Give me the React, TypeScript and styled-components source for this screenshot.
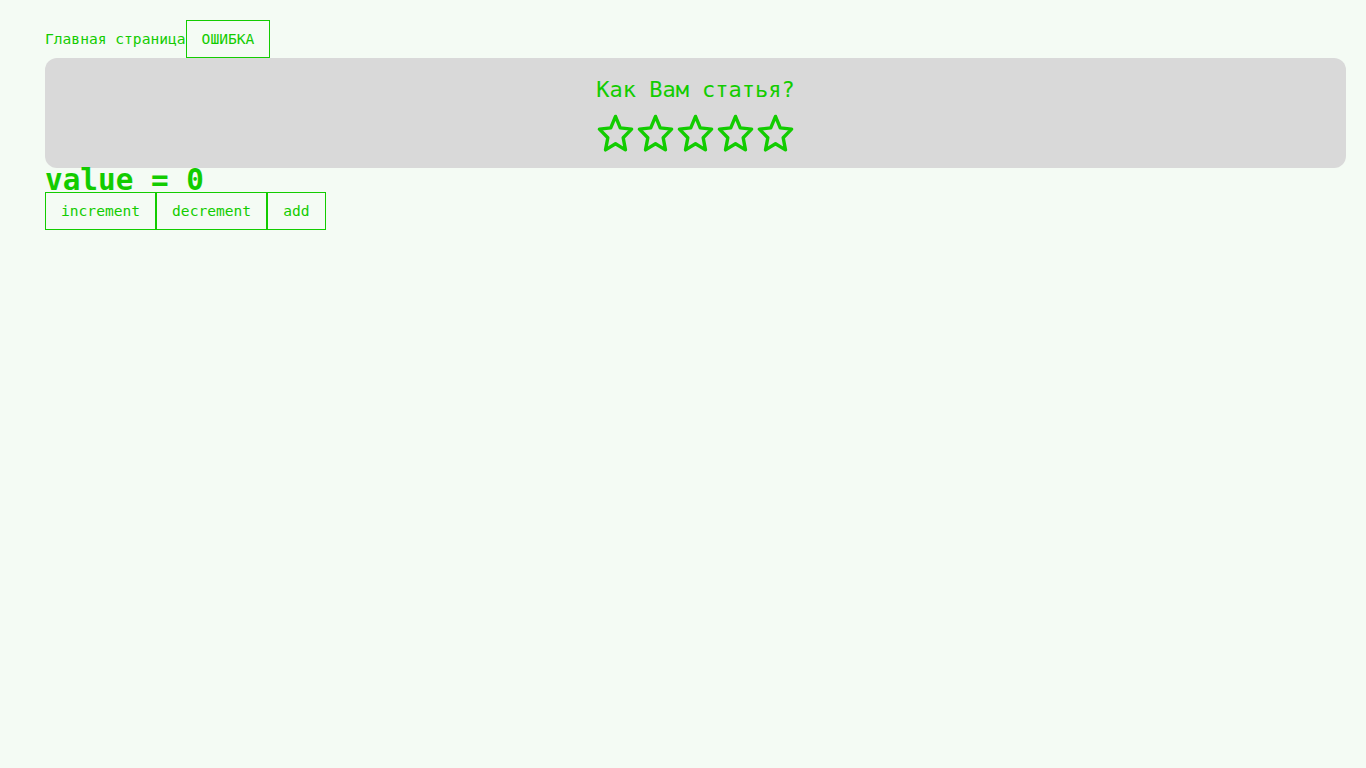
import React from "react";
import styled, { createGlobalStyle } from "styled-components";

const GREEN = "#12cc00";

const GlobalStyle = createGlobalStyle`
  html, body {
    margin: 0;
    padding: 0;
    background: #f4fbf4;
  }
  body {
    font-family: "DejaVu Sans Mono", "Liberation Mono", monospace;
    font-size: 14.6px;
    color: ${GREEN};
  }
`;

const Page = styled.div`
  min-height: 768px;
  box-sizing: border-box;
  padding: 20px 20px 0 45px;
  display: flex;
  flex-direction: column;
`;

const Navbar = styled.nav`
  display: flex;
  align-items: center;
`;

const NavLink = styled.a`
  color: ${GREEN};
  text-decoration: none;
  font-size: 14.6px;
  line-height: 16px;
`;

const OutlineButton = styled.button`
  font-family: inherit;
  font-size: 14.6px;
  font-weight: normal;
  line-height: 16px;
  color: ${GREEN};
  background: transparent;
  border: 1px solid ${GREEN};
  padding: 10px 15px;
  margin: 0;
  cursor: pointer;
`;

const Card = styled.section`
  background: #d9d9d9;
  border-radius: 12px;
  padding: 16px 0 15px;
  display: flex;
  flex-direction: column;
  align-items: center;
  gap: 7px;
`;

const CardTitle = styled.h2`
  margin: 0;
  font-size: 22px;
  line-height: 32px;
  font-weight: normal;
  color: ${GREEN};
`;

const Stars = styled.div`
  display: flex;
`;

const StarSvg = styled.svg`
  width: 40px;
  height: 40px;
  display: block;
  cursor: pointer;
`;

const ValueTitle = styled.h1`
  margin: 0;
  font-size: 29.33px;
  line-height: 24px;
  font-weight: bold;
  color: ${GREEN};
`;

const ButtonRow = styled.div`
  display: flex;
`;

const Star = () => (
  <StarSvg viewBox="0 0 40 40">
    <path
      d="M19.5 3.4 L24.24 14.82 L35.62 16.16 L27.18 24.69 L29.48 36.9 L19.5 30.78 L9.52 36.9 L11.82 24.69 L3.38 16.16 L14.76 14.82 Z"
      fill="none"
      stroke={GREEN}
      strokeWidth={3.4}
      strokeLinejoin="round"
    />
  </StarSvg>
);

export default function App() {
  return (
    <>
      <GlobalStyle />
      <Page>
        <Navbar>
          <NavLink href="#">Главная страница</NavLink>
          <OutlineButton>ОШИБКА</OutlineButton>
        </Navbar>
        <Card>
          <CardTitle>Как Вам статья?</CardTitle>
          <Stars>
            {[0, 1, 2, 3, 4].map((i) => (
              <Star key={i} />
            ))}
          </Stars>
        </Card>
        <ValueTitle>value = 0</ValueTitle>
        <ButtonRow>
          <OutlineButton>increment</OutlineButton>
          <OutlineButton>decrement</OutlineButton>
          <OutlineButton>add</OutlineButton>
        </ButtonRow>
      </Page>
    </>
  );
}
